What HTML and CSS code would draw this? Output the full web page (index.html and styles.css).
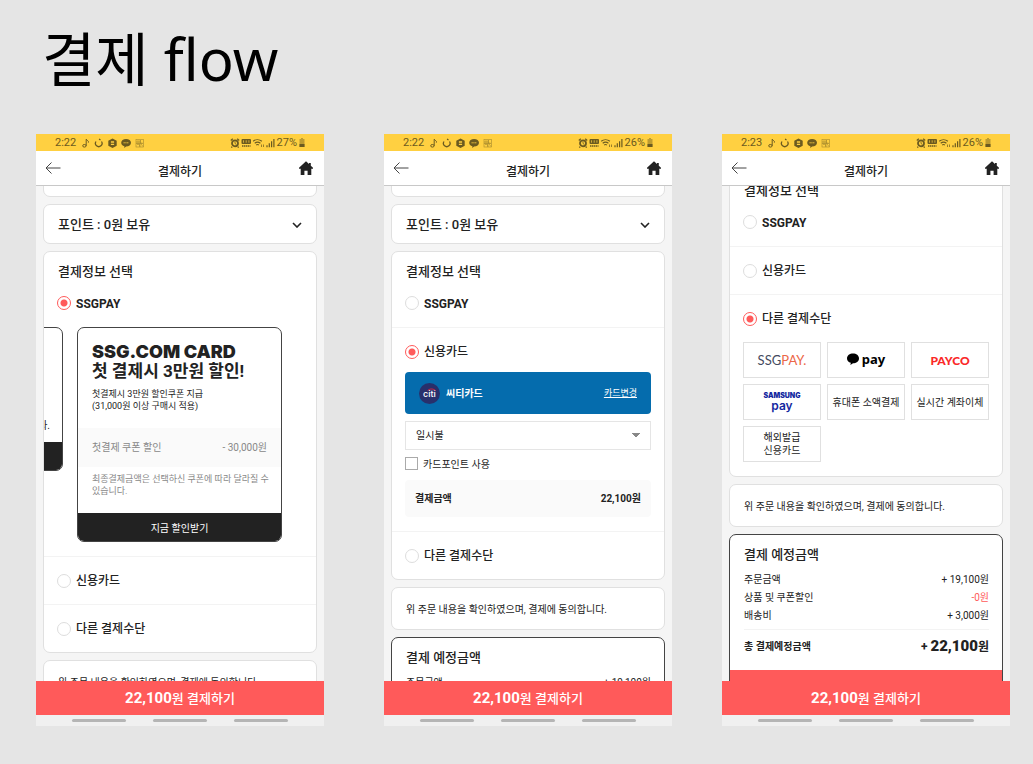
FILE: index.html
```html
<!DOCTYPE html>
<html lang="ko">
<head>
  <meta charset="UTF-8" />
  <title>결제 flow</title>
  <meta name="viewport" content="width=device-width, initial-scale=1.0" />
  <link rel="stylesheet" href="styles.css">
</head>
<body>

<!-- Iconos compartidos -->
<svg class="sprite" aria-hidden="true">
  <symbol id="i-notis" viewBox="0 0 62 10">
    <g fill="none" stroke="currentColor" stroke-width="1">
      <ellipse cx="2.4" cy="7.8" rx="1.7" ry="1.3"/>
      <path d="M4.2 7.8V1.2c.5 1.200 1.600 1 2.200 2.200v1.200"/>
      <path d="M14 3.500a3.300 3.300 0 1 0 5.500 0M17 1.200l1.500.6" stroke-width="1.300"/>
      <rect x="54" y="1.500" width="7.500" height="7.500" stroke-width=".6" opacity=".6"/>
      <path d="M55 3h2v2h-2zM58.500 2v3h2M55 6.500h2.500v2M59 6l2 2.500M54 5.500h7M58 2v7" stroke-width=".6" opacity=".6"/>
    </g>
    <path fill="currentColor" d="M30.500.5l4.200 2.200v5.100l-4.200 2.200-4.200-2.200V2.700z"/>
    <path d="M28.900 3.300h3.200v1.400h-3.200zM28.900 5.700h3.200v1.400h-3.200z" fill="#ffd041"/>
    <path fill="currentColor" d="M44.100 1c2.800 0 4.900 1.500 4.900 3.700s-2.100 3.700-4.900 3.700l-1.900 1.500.2-1.700c-1.900-.6-3.200-1.800-3.200-3.500 0-2.200 2.100-3.700 4.900-3.700z"/>
    <path d="M41.500 4.800h5" stroke="#ffd041" stroke-width=".9" stroke-dasharray="1.300 .5"/>
  </symbol>
  <symbol id="i-signal" viewBox="0 0 46 10">
    <g fill="none" stroke="currentColor">
      <circle cx="5" cy="5.300" r="3" stroke-width="1.800"/>
      <path d="M.8 2.500L2.800.8M9.200 2.500L7.200.8M2.200 8.800l-.9.8M7.800 8.800l.9.8" stroke-width="1.300"/>
      <path d="M5 3.500v2l1.200.8" stroke-width=".8"/>
      <path d="M23.200 3.200c2.500-2 6.200-2 8.700 0M24.700 5.200c1.700-1.300 4-1.300 5.700 0M26.200 7c.8-.6 1.900-.6 2.700 0" stroke-width="1.100"/>
      <path d="M31.500 6.500v2.500M33.500 6.500v2.500" stroke-width=".7"/>
      <path d="M37 9.200V7.200M39.300 9.200V5.200M41.600 9.200V3.200M43.900 9.200V1" stroke-width="1.200"/>
    </g>
    <rect x="11.500" y="1" width="9.500" height="5" rx="1" fill="currentColor"/>
    <path d="M13.500 2.300v2.400M16.200 2.300v2.400M18.900 2.300v2.400" stroke="#ffd041" stroke-width=".7"/>
    <path d="M12 8h8.500" stroke="currentColor" stroke-width="1.400" stroke-dasharray="1.500 .5"/>
  </symbol>
  <symbol id="i-battery" viewBox="0 0 6 9">
    <path d="M2 0h2v1h1.500v8h-5V1H2z" fill="currentColor" opacity=".45"/>
    <path d="M.5 6h5v3h-5z" fill="currentColor"/>
  </symbol>
  <symbol id="i-back" viewBox="0 0 16 12">
    <path d="M6.500.5L1 6l5.500 5.500M1 6h14.500" fill="none" stroke="#444" stroke-width="1"/>
  </symbol>
  <symbol id="i-home" viewBox="0 0 14 14">
    <path d="M7 .3L0 6.800v.9h1.700V14h3.700V9.800h3.200V14h3.700V7.700H14v-.9L11.800 4.700V2H10v1.100z" fill="#222"/>
  </symbol>
  <symbol id="i-chevron" viewBox="0 0 10 6">
    <path d="M1 1l4 4 4-4" fill="none" stroke="#222" stroke-width="1.600"/>
  </symbol>
</svg>

<h1>결제 flow</h1>

<main class="flow">

  <!-- Pantalla 1: SSGPAY -->
  <section class="phone">
    <div class="status">
      <span>2:22</span>
      <svg class="notis"><use href="#i-notis"/></svg>
      <svg class="signal"><use href="#i-signal"/></svg>
      <span>27%</span>
      <svg class="battery"><use href="#i-battery"/></svg>
    </div>
    <header class="appbar">
      <a href="#" aria-label="뒤로"><svg class="back"><use href="#i-back"/></svg></a>
      <h2>결제하기</h2>
      <a href="#" aria-label="홈"><svg class="home"><use href="#i-home"/></svg></a>
    </header>
    <div class="content">
      <div class="card tail"></div>
      <button class="card points">포인트 : 0원 보유 <svg class="chevron"><use href="#i-chevron"/></svg></button>
      <div class="card">
        <h3>결제정보 선택</h3>
        <div class="option">
          <label class="brand"><input type="radio" name="pago1" checked> SSGPAY</label>
          <div class="carousel">
            <div class="slide prev">
              <p>다.</p>
              <div class="slide-foot"></div>
            </div>
            <div class="slide">
              <div class="slide-head">
                <strong class="slide-brand">SSG.COM CARD</strong>
                <strong class="slide-title">첫 결제시 3만원 할인!</strong>
                <p>첫결제시 3만원 할인쿠폰 지급<br>(31,000원 이상 구매시 적용)</p>
              </div>
              <div class="coupon"><span>첫결제 쿠폰 할인</span><span>- 30,000원</span></div>
              <p class="note">최종결제금액은 선택하신 쿠폰에 따라 달라질 수 있습니다.</p>
              <button class="slide-foot">지금 할인받기</button>
            </div>
          </div>
        </div>
        <div class="option">
          <label><input type="radio" name="pago1"> 신용카드</label>
        </div>
        <div class="option">
          <label><input type="radio" name="pago1"> 다른 결제수단</label>
        </div>
      </div>
      <div class="card agree">위 주문 내용을 확인하였으며, 결제에 동의합니다.</div>
    </div>
    <button class="pay"><b>22,100</b>원 결제하기</button>
    <div class="navbar"><i></i><i></i><i></i></div>
  </section>

  <!-- Pantalla 2: tarjeta de crédito -->
  <section class="phone">
    <div class="status">
      <span>2:22</span>
      <svg class="notis"><use href="#i-notis"/></svg>
      <svg class="signal"><use href="#i-signal"/></svg>
      <span>26%</span>
      <svg class="battery"><use href="#i-battery"/></svg>
    </div>
    <header class="appbar">
      <a href="#" aria-label="뒤로"><svg class="back"><use href="#i-back"/></svg></a>
      <h2>결제하기</h2>
      <a href="#" aria-label="홈"><svg class="home"><use href="#i-home"/></svg></a>
    </header>
    <div class="content">
      <div class="card tail"></div>
      <button class="card points">포인트 : 0원 보유 <svg class="chevron"><use href="#i-chevron"/></svg></button>
      <div class="card">
        <h3>결제정보 선택</h3>
        <div class="option">
          <label class="brand"><input type="radio" name="pago2"> SSGPAY</label>
        </div>
        <div class="option">
          <label><input type="radio" name="pago2" checked> 신용카드</label>
          <div class="credit">
            <div class="bank">
              <span class="citi">citi<svg viewBox="0 0 9 3"><path d="M.5 2.800C2.500.4 6.500.4 8.500 2.800" fill="none" stroke="#e0243c" stroke-width="1"/></svg></span>
              <strong>씨티카드</strong>
              <a href="#">카드변경</a>
            </div>
            <select aria-label="할부"><option>일시불</option></select>
            <label class="check"><input type="checkbox"> 카드포인트 사용</label>
            <div class="amount"><span>결제금액</span><span>22,100원</span></div>
          </div>
        </div>
        <div class="option">
          <label><input type="radio" name="pago2"> 다른 결제수단</label>
        </div>
      </div>
      <div class="card agree">위 주문 내용을 확인하였으며, 결제에 동의합니다.</div>
      <div class="card total">
        <h3>결제 예정금액</h3>
        <dl>
          <div><dt>주문금액</dt><dd>+ 19,100원</dd></div>
        </dl>
      </div>
    </div>
    <button class="pay"><b>22,100</b>원 결제하기</button>
    <div class="navbar"><i></i><i></i><i></i></div>
  </section>

  <!-- Pantalla 3: otros medios de pago -->
  <section class="phone">
    <div class="status">
      <span>2:23</span>
      <svg class="notis"><use href="#i-notis"/></svg>
      <svg class="signal"><use href="#i-signal"/></svg>
      <span>26%</span>
      <svg class="battery"><use href="#i-battery"/></svg>
    </div>
    <header class="appbar">
      <a href="#" aria-label="뒤로"><svg class="back"><use href="#i-back"/></svg></a>
      <h2>결제하기</h2>
      <a href="#" aria-label="홈"><svg class="home"><use href="#i-home"/></svg></a>
    </header>
    <div class="content scrolled">
      <div class="card">
        <h3>결제정보 선택</h3>
        <div class="option">
          <label class="brand"><input type="radio" name="pago3"> SSGPAY</label>
        </div>
        <div class="option">
          <label><input type="radio" name="pago3"> 신용카드</label>
        </div>
        <div class="option">
          <label><input type="radio" name="pago3" checked> 다른 결제수단</label>
          <div class="methods">
            <button class="ssgpay">SSG<span>PAY.</span></button>
            <button class="kakao"><svg viewBox="0 0 12 12"><path d="M6 .5c3.300 0 6 2 6 4.900s-2.700 4.900-6 4.900l-2.600 1.600.4-2.100C1.500 9 0 7.400 0 5.400 0 2.500 2.700.5 6 .5z"/></svg>pay</button>
            <button class="payco">PAYCO</button>
            <button class="samsung"><small>SAMSUNG</small>pay</button>
            <button>휴대폰 소액결제</button>
            <button>실시간 계좌이체</button>
            <button>해외발급<br>신용카드</button>
          </div>
        </div>
      </div>
      <div class="card agree">위 주문 내용을 확인하였으며, 결제에 동의합니다.</div>
      <div class="card total">
        <h3>결제 예정금액</h3>
        <dl>
          <div><dt>주문금액</dt><dd>+ 19,100원</dd></div>
          <div><dt>상품 및 쿠폰할인</dt><dd class="minus">-0원</dd></div>
          <div><dt>배송비</dt><dd>+ 3,000원</dd></div>
          <div class="sum"><dt>총 결제예정금액</dt><dd>+ <b>22,100</b>원</dd></div>
        </dl>
        <div class="total-foot"></div>
      </div>
    </div>
    <button class="pay"><b>22,100</b>원 결제하기</button>
    <div class="navbar"><i></i><i></i><i></i></div>
  </section>

</main>

</body>
</html>
```
FILE: styles.css
```css
:root {
  --bg-color: #e5e5e5;
  --text-color: #222;
  --line: #e0e0e0;
  --line-soft: #f3f3f3;
  --accent: #ff5a5a;
  --status: #ffd041;
}

* {
  box-sizing: border-box;
  margin: 0;
  padding: 0;
}

body {
  display: flex;
  flex-direction: column;
  height: 100vh;
  padding: 16px 23px 38px 36px;
  font-family: Roboto, "Noto Sans CJK KR", sans-serif;
  font-size: 10px;
  line-height: 12px;
  background: var(--bg-color);
  color: var(--text-color);
}

button, select, input {
  font: inherit;
  color: inherit;
}
button {
  border: none;
  cursor: pointer;
}
a {
  color: inherit;
}
svg {
  display: block;
}
.sprite {
  position: absolute;
  width: 0;
  height: 0;
}

h1 {
  padding: 0 6px;
  font-family: "Noto Sans", "Noto Sans CJK KR", sans-serif;
  font-size: 58px;
  line-height: 86px;
  font-weight: 400;
  color: #000;
}

.flow {
  display: flex;
  flex: 1;
  gap: 50px;
  min-height: 0;
  margin-top: 32px;
}
.phone {
  display: flex;
  flex: 1;
  flex-direction: column;
  min-width: 0;
  background: #f5f5f5;
}
.phone:first-child {
  margin-right: 10px;
}

/* barra de estado */
.status {
  display: flex;
  flex: none;
  align-items: center;
  height: 17px;
  padding: 0 19px;
  font-size: 11px;
  background: var(--status);
  color: #6b5a20;
}
.notis {
  width: 62px;
  height: 10px;
  margin-left: 6px;
}
.signal {
  width: 46px;
  height: 10px;
  margin-left: auto;
  margin-right: 1px;
}
.battery {
  width: 6px;
  height: 9px;
  margin-left: 2px;
}

/* cabecera */
.appbar {
  display: flex;
  flex: none;
  align-items: center;
  justify-content: space-between;
  height: 35px;
  padding: 0 11px 0 9px;
  background: #fff;
  border-bottom: 1px solid #c8c8c8;
}
.appbar h2 {
  padding-top: 7px;
  font-size: 12px;
  line-height: 18px;
  font-weight: 500;
}
.back {
  width: 16px;
  height: 12px;
}
.home {
  width: 14px;
  height: 14px;
}

/* contenido */
.content {
  display: flex;
  flex: 1;
  flex-direction: column;
  gap: 7px;
  min-height: 0;
  padding: 0 7px;
  overflow: hidden;
}
.card {
  flex: none;
  background: #fff;
  border: 1px solid var(--line);
  border-radius: 7px;
}
.card h3 {
  padding: 12px 14px 0;
  font-size: 13px;
  line-height: 16px;
  font-weight: 500;
}
.tail {
  height: 20px;
  margin-top: -9px;
}
.scrolled .card:first-child {
  margin-top: -16px;
}
.points {
  display: flex;
  align-items: center;
  justify-content: space-between;
  height: 40px;
  padding: 2px 14px 0;
  font-size: 13px;
  font-weight: 500;
}
.chevron {
  width: 10px;
  height: 6px;
}

.option {
  padding: 13px;
  border-top: 1px solid var(--line-soft);
}
h3 + .option {
  border-top: none;
}
.option > label {
  display: flex;
  align-items: center;
  gap: 5px;
  padding-top: 2px;
  font-size: 12px;
  line-height: 19px;
  font-weight: 500;
}
.option > .brand {
  padding-top: 1px;
  line-height: 20px;
  font-weight: 700;
}
input[type="radio"] {
  width: 14px;
  height: 14px;
  margin-bottom: 2px;
  appearance: none;
  background: #fff;
  border: 1px solid #ddd;
  border-radius: 50%;
}
input[type="radio"]:checked {
  background: radial-gradient(circle, var(--accent) 3px, #fff 4px);
  border-color: var(--accent);
}

/* carrusel de promociones */
.carousel {
  display: flex;
  align-items: flex-start;
  gap: 14px;
  margin: 13px -13px 1px;
  overflow: hidden;
}
.slide {
  flex: none;
  width: 205px;
  background: #fff;
  border: 1px solid #444;
  border-radius: 7px;
  overflow: hidden;
}
.prev {
  margin-left: -186px;
  padding-top: 92px;
  text-align: right;
}
.prev p {
  padding: 0 12px 10px;
}
.slide-head {
  padding: 15px 14px 16px;
  font-size: 9px;
}
.slide-brand {
  display: block;
  font-family: Inter, sans-serif;
  font-size: 18px;
  line-height: 18px;
  font-weight: 900;
}
.slide-title {
  display: block;
  margin-bottom: 7px;
  font-size: 17px;
  line-height: 20px;
  font-weight: 700;
}
.coupon {
  display: flex;
  justify-content: space-between;
  padding: 1px 14px 0;
  line-height: 38px;
  background: #fafafa;
  color: #888;
}
.note {
  padding: 6px 8px 16px 14px;
  font-size: 9px;
  color: #888;
}
.slide-foot {
  display: block;
  width: 100%;
  height: 28px;
  padding-top: 3px;
  background: #222;
  color: #fff;
}

/* tarjeta de crédito */
.credit {
  margin: 10px 0 1px;
}
.bank {
  display: flex;
  align-items: center;
  gap: 6px;
  height: 42px;
  padding: 0 14px;
  border-radius: 4px;
  background: #056cad;
  color: #fff;
}
.bank strong {
  padding-top: 2px;
}
.bank a {
  margin-left: auto;
  font-size: 9px;
}
.citi {
  position: relative;
  width: 21px;
  border-radius: 50%;
  font-family: Inter, sans-serif;
  font-size: 9px;
  line-height: 21px;
  font-weight: 500;
  text-align: center;
  background: #28306c;
}
.citi svg {
  position: absolute;
  top: 5px;
  left: 8px;
  width: 9px;
  height: 3px;
}
.credit select {
  display: block;
  width: 100%;
  height: 29px;
  margin-top: 7px;
  padding: 0 10px;
  appearance: none;
  border: 1px solid #e5e5e5;
  background: linear-gradient(to bottom right, #888 50%, transparent 50%) right 10px top 11px / 4px 5px no-repeat, linear-gradient(to bottom left, #888 50%, transparent 50%) right 14px top 11px / 4px 5px no-repeat, #fff;
}
.check {
  display: flex;
  align-items: center;
  gap: 5px;
  margin-top: 5px;
  padding-top: 2px;
  line-height: 13px;
}
.check input {
  width: 13px;
  height: 13px;
  margin-bottom: 2px;
  appearance: none;
  border: 1px solid #aaa;
}
.amount {
  display: flex;
  justify-content: space-between;
  margin-top: 8px;
  padding: 0 10px;
  border-radius: 4px;
  line-height: 37px;
  font-weight: 700;
  background: #fafafa;
}

/* otros medios */
.methods {
  display: grid;
  grid-template-columns: repeat(3, 1fr);
  gap: 6px;
  margin: 13px 0 1px;
}
.methods button {
  height: 36px;
  border: 1px solid var(--line);
  background: #fff;
  line-height: 13px;
  white-space: nowrap;
}
.methods .ssgpay {
  font-family: Lato, sans-serif;
  font-size: 13px;
  color: #454a60;
}
.ssgpay span {
  color: #ec6748;
}
.methods .kakao {
  display: flex;
  align-items: center;
  justify-content: center;
  gap: 3px;
  padding-bottom: 3px;
  font-family: "Noto Sans", sans-serif;
  font-size: 13px;
  line-height: 16px;
  font-weight: 700;
  color: #000;
}
.kakao svg {
  width: 12px;
  height: 12px;
}
.methods .payco {
  font-family: Lato, sans-serif;
  font-size: 12px;
  font-weight: 900;
  color: #fa2828;
}
.methods .samsung {
  font-family: Inter, sans-serif;
  font-size: 12px;
  line-height: 12px;
  font-weight: 600;
  color: #1428a0;
}
.samsung small {
  display: block;
  font-size: 7px;
  line-height: 8px;
  font-weight: 900;
}

.agree {
  padding: 2px 14px 0;
  line-height: 39px;
}

/* resumen */
.total {
  border-color: #444;
  overflow: hidden;
}
dl {
  padding: 8px 13px 0 14px;
}
dl div {
  display: flex;
  align-items: center;
  justify-content: space-between;
  line-height: 18px;
}
.minus {
  color: var(--accent);
}
dl .sum {
  margin-top: 4px;
  padding: 7px 0 14px;
  border-top: 1px solid var(--line-soft);
  font-weight: 700;
}
.sum dd {
  font-size: 12px;
}
.sum b {
  font-size: 15px;
}
.total-foot {
  height: 34px;
  background: var(--accent);
}

/* botón de pago y navegación */
.pay {
  flex: none;
  height: 34px;
  font-size: 13px;
  font-weight: 500;
  background: var(--accent);
  color: #fff;
}
.pay b {
  font-size: 15px;
  font-weight: 700;
}
.navbar {
  display: flex;
  flex: none;
  justify-content: center;
  gap: 27px;
  height: 11px;
  padding-top: 4px;
  background: #f0f0f0;
}
.navbar i {
  width: 54px;
  height: 3px;
  border-radius: 2px;
  background: #b5b5b5;
}
```
